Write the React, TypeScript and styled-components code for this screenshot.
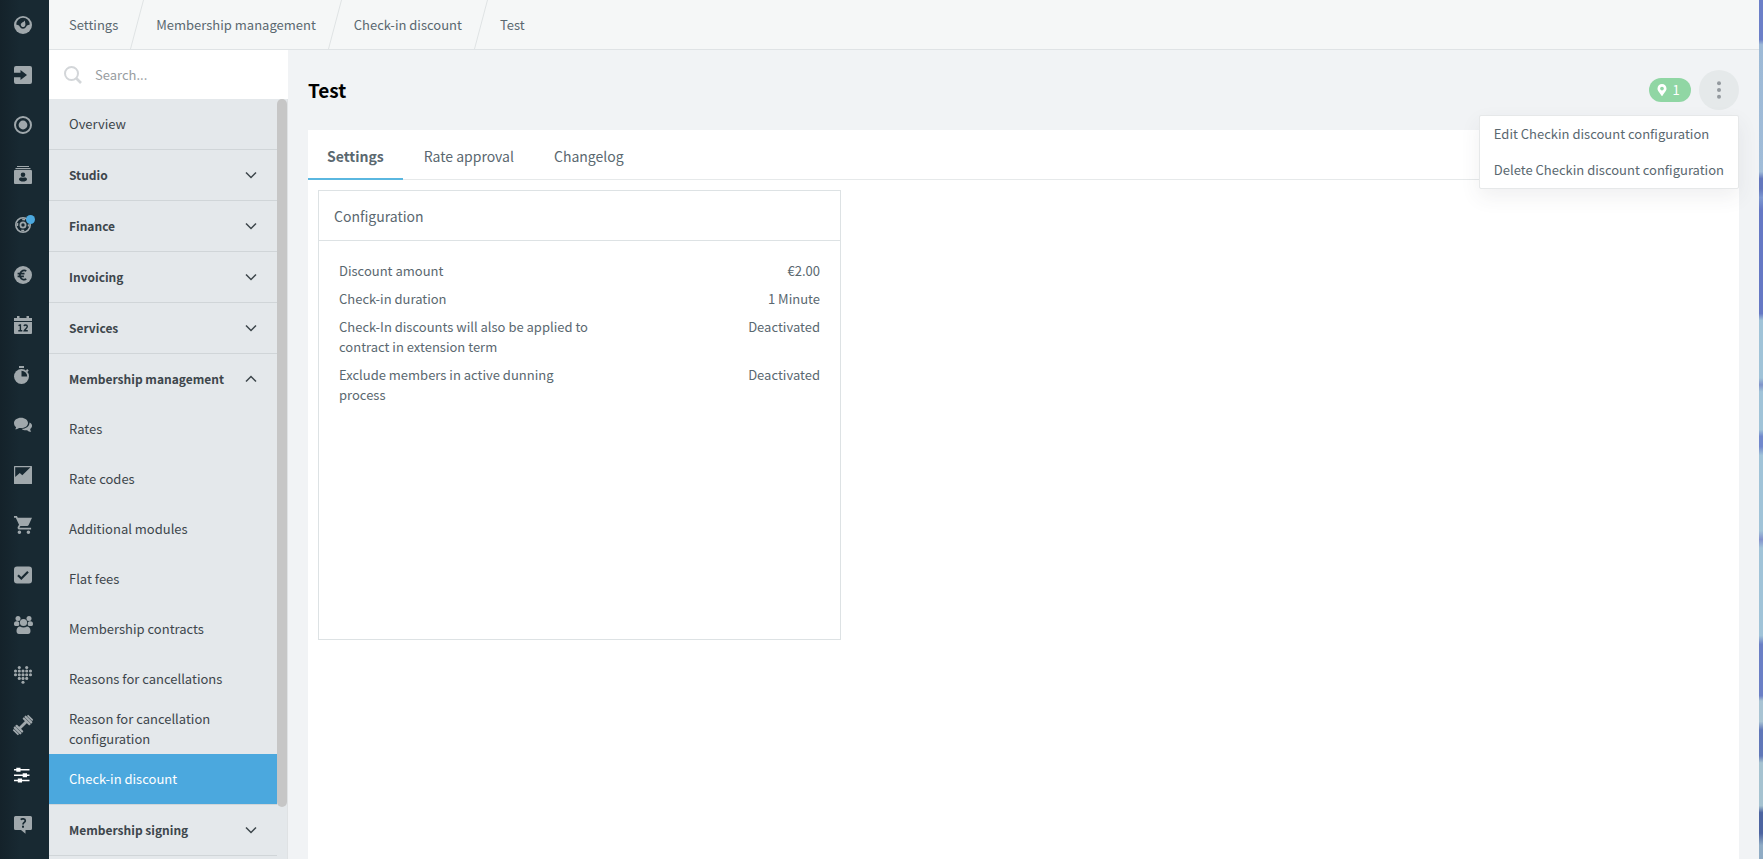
import React from "react";
import styled, { createGlobalStyle, css } from "styled-components";
import { FaMapMarkerAlt } from "react-icons/fa";

const GlobalStyle = createGlobalStyle`
  *, *::before, *::after { box-sizing: border-box; }
  body {
    margin: 0;
    font-family: "Noto Sans CJK SC", "Noto Sans", sans-serif;
    font-size: 13px;
    line-height: 20px;
    color: #5a6870;
  }
  button, input { font: inherit; color: inherit; }
  a { color: inherit; text-decoration: none; }
`;

const Shell = styled.div`
  display: flex;
  height: 100vh;
  overflow: hidden;
  background: #f1f3f5;
`;

const Rail = styled.nav`
  display: flex;
  flex-direction: column;
  flex: none;
  width: 49px;
  background: linear-gradient(90deg, #14222a 0, #182932 20px, #182932 100%);
`;

const RailLink = styled.a<{ $active?: boolean }>`
  position: relative;
  display: flex;
  align-items: center;
  flex: none;
  height: 50px;
  padding-left: 14px;
  color: ${(p) => (p.$active ? "#ffffff" : "#a0a8ac")};
`;

const RailDot = styled.span`
  position: absolute;
  top: 15px;
  left: 26px;
  width: 9px;
  height: 9px;
  border-radius: 50%;
  background: #4ba8de;
`;

const Workspace = styled.div`
  display: flex;
  flex-direction: column;
  flex: 1;
  min-width: 0;
`;

const Breadcrumbs = styled.nav`
  display: flex;
  align-items: center;
  gap: 12px;
  flex: none;
  height: 50px;
  padding-left: 20px;
  background: #f5f7f7;
  border-bottom: 1px solid #dfe3e5;
`;

const Columns = styled.div`
  display: flex;
  flex: 1;
  min-height: 0;
`;

const Sidebar = styled.aside`
  display: flex;
  flex-direction: column;
  flex: none;
  width: 239px;
`;

const SearchBar = styled.label`
  display: flex;
  align-items: center;
  gap: 13px;
  flex: none;
  height: 49px;
  padding-left: 15px;
  background: #ffffff;
  color: #d3d6d9;
`;

const SearchInput = styled.input`
  flex: 1;
  min-width: 0;
  padding: 0;
  border: 0;
  outline: 0;
  background: transparent;
  color: #3d464b;
  &::placeholder { color: #989da1; opacity: 1; }
`;

const SidebarBody = styled.div`
  display: flex;
  flex: 1;
  min-height: 0;
  background: #e4e8eb;
  border-right: 1px solid #dfe2e4;
`;

const Menu = styled.nav`
  flex: 1;
  overflow: hidden;
  color: #3d464b;
`;

const ScrollThumb = styled.div`
  flex: none;
  width: 10px;
  height: 93.2%;
  border-radius: 5px;
  background: #c6c6c6;
`;

const MenuSection = styled.div`
  border-bottom: 1px solid #d0d5d8;
`;

const MenuLink = styled.a<{ $active?: boolean }>`
  display: flex;
  align-items: center;
  height: 50px;
  padding: 0 40px 0 20px;
  ${(p) => p.$active && css`background: #4ba8de; color: #ffffff;`}
`;

const MenuToggle = styled.button`
  display: flex;
  align-items: center;
  justify-content: space-between;
  width: 100%;
  height: 50px;
  padding: 0 20px;
  border: 0;
  background: transparent;
  font-size: 12px;
  font-weight: 700;
  white-space: nowrap;
`;

const Main = styled.main`
  display: flex;
  flex-direction: column;
  flex: 1;
  min-width: 0;
  padding: 0 20px;
`;

const PageHeader = styled.header`
  display: flex;
  align-items: center;
  gap: 8px;
  flex: none;
  height: 80px;
`;

const Title = styled.h1`
  flex: 1;
  margin: 0;
  font-size: 19px;
  line-height: 28px;
  font-weight: 700;
  color: #000000;
`;

const Badge = styled.span`
  display: flex;
  align-items: center;
  justify-content: center;
  gap: 4px;
  width: 42px;
  height: 24px;
  padding-right: 4px;
  border-radius: 12px;
  background: #90d6a4;
  color: #ffffff;
`;

const Actions = styled.div`
  position: relative;
`;

const MoreButton = styled.button`
  display: flex;
  align-items: center;
  justify-content: center;
  width: 40px;
  height: 40px;
  padding: 0;
  border: 0;
  border-radius: 50%;
  background: #e5e9ea;
  color: #949a9f;
`;

const ActionMenu = styled.div`
  position: absolute;
  top: 45px;
  right: 0;
  z-index: 1;
  display: flex;
  flex-direction: column;
  background: #ffffff;
  border: 1px solid #e6e8e9;
  border-radius: 2px;
  box-shadow: 0 8px 20px rgba(60, 70, 80, 0.08);
`;

const ActionItem = styled.button`
  height: 36px;
  padding: 0 14px;
  border: 0;
  background: transparent;
  text-align: left;
  white-space: nowrap;
`;

const Panel = styled.section`
  flex: 1;
  background: #ffffff;
`;

const Tabs = styled.div`
  display: flex;
  gap: 2px;
  height: 50px;
  border-bottom: 1px solid #e6e9ea;
`;

const Tab = styled.button<{ $active?: boolean }>`
  height: 50px;
  padding: 4px 19px 0;
  border: 0;
  border-bottom: 2px solid ${(p) => (p.$active ? "#5ab7e0" : "transparent")};
  background: transparent;
  font-size: 14px;
  font-weight: ${(p) => (p.$active ? 700 : 400)};
`;

const PanelBody = styled.div`
  display: grid;
  grid-template-columns: minmax(0, 523fr) minmax(0, 888fr);
  padding: 10px;
`;

const Card = styled.article`
  min-height: 450px;
  border: 1px solid #dde2e4;
`;

const CardTitle = styled.h2`
  display: flex;
  align-items: center;
  height: 50px;
  margin: 0;
  padding: 0 15px;
  border-bottom: 1px solid #dde2e4;
  font-size: 14px;
  font-weight: 400;
`;

const Facts = styled.dl`
  display: flex;
  flex-direction: column;
  gap: 8px;
  margin: 0;
  padding: 20px;
`;

const Fact = styled.div`
  display: grid;
  grid-template-columns: 13fr 11fr;
`;

const FactValue = styled.dd`
  margin: 0;
  text-align: right;
`;

const Backdrop = styled.div`
  flex: none;
  width: 4px;
  background: linear-gradient(
    180deg,
    #6b7fc8 0, #6b7fc8 4.6%, #9db9d6 5.2%, #a0bcd8 20%, #6377bd 20.8%, #6377bd 22%,
    #7c97d0 23%, #6578c4 24.5%, #6578c4 36.5%, #a0c3d8 37.3%, #a0c3d8 44%, #7f93c9 44.8%,
    #a0c3d8 45.6%, #a0c3d8 50%, #7088cc 50.8%, #7088cc 52%, #a0c3d8 53%, #a0c3d8 61.8%,
    #8292cc 62.8%, #a0c3d8 63.8%, #a0c3d8 74%, #6a7fc5 75%, #6a7fc5 81%, #a8c3d3 81.6%,
    #a8c3d3 84%, #5f76b8 85%, #6078b8 88%, #a5c2d0 88.8%, #a5c2d0 93.8%, #4c64a0 94.6%,
    #4c64a0 97%, #8fabc4 98.4%, #8fabc4 100%
  );
`;

function RailIcon({ children, viewBox = "0 0 18 18" }: { children: React.ReactNode; viewBox?: string }) {
  return (
    <svg width="18" height="18" viewBox={viewBox} fill="currentColor" overflow="visible" aria-hidden="true">
      {children}
    </svg>
  );
}

const dark = "#182932";

const heartDots: [number, number[]][] = [
  [1.5, [5.3, 12.7]],
  [5, [1.5, 5.3, 9, 12.7, 16.5]],
  [8.7, [1.5, 5.3, 9, 12.7, 16.5]],
  [12.4, [5.3, 9, 12.7]],
  [16.3, [9]],
];

const railItems: { name: string; icon: React.ReactNode; active?: boolean; dot?: boolean }[] = [
  {
    name: "Dashboard",
    icon: (
      <RailIcon>
        <circle cx="9" cy="9" r="9" />
        <path d="M2.2 8.6a6.8 6.8 0 0 1 13.6 0l-2.2.6c-.8 0-1 .8-1.4 1.600a3.600 3.600 0 0 1-6.400 0c-.4-.8-.6-1.600-1.400-1.600z" fill={dark} />
        <path d="M10.800 4.600c.2 2 .9 3 .5 4.600a2.300 2.300 0 1 1-3.600-2.300c1.200-.7 2.200-1 3.100-2.300z" />
      </RailIcon>
    ),
  },
  {
    name: "Check-in",
    icon: (
      <RailIcon>
        <path d="M2 0h14a2 2 0 0 1 2 2v14a2 2 0 0 1-2 2H2a2 2 0 0 1-2-2v-4.800h6.500V14L13 9 6.500 4v2.800H0V2a2 2 0 0 1 2-2z" />
      </RailIcon>
    ),
  },
  {
    name: "Live view",
    icon: (
      <RailIcon>
        <circle cx="9" cy="9" r="8" fill="none" stroke="currentColor" strokeWidth="2" />
        <circle cx="9" cy="9" r="4.400" />
      </RailIcon>
    ),
  },
  {
    name: "Members",
    icon: (
      <RailIcon>
        <rect x="3" y="0" width="12" height="1" />
        <rect x="1.500" y="2" width="15" height="1.200" />
        <rect x="0" y="4" width="18" height="14" rx="1" />
        <circle cx="9" cy="8.700" r="2.300" fill={dark} />
        <path d="M5 13.500c0-2.200 2-2.200 4-1.800 2-.4 4-.4 4 1.800C12.500 15 11 15.500 9 15.500S5.500 15 5 13.500z" fill={dark} />
      </RailIcon>
    ),
  },
  {
    name: "Leads",
    dot: true,
    icon: (
      <RailIcon>
        <circle cx="9" cy="9" r="7.200" fill="none" stroke="currentColor" strokeWidth="1.600" />
        <circle cx="9" cy="9" r="5.600" fill="none" stroke="currentColor" strokeWidth="1.600" strokeDasharray="3 5.796" strokeDashoffset="1.500" />
        <circle cx="9" cy="9" r="2.600" fill="none" stroke="currentColor" strokeWidth="1.800" />
      </RailIcon>
    ),
  },
  {
    name: "Finance",
    icon: (
      <RailIcon>
        <circle cx="9" cy="9" r="9" />
        <path d="M12.300 4.900a4.200 4.200 0 0 0-6 2.200c-.5 1.300-.5 2.700 0 4a4.200 4.200 0 0 0 6 2M3.600 7.700h6.900M3.600 10.300h6.300" fill="none" stroke={dark} strokeWidth="1.700" />
      </RailIcon>
    ),
  },
  {
    name: "Calendar",
    icon: (
      <RailIcon>
        <path d="M0 2h3V0h2.500v2h7V0H15v2h3v3H0z" />
        <path d="M0 6h18v11a1 1 0 0 1-1 1H1a1 1 0 0 1-1-1z" />
        <path d="M4.500 9.700l1.600-.8h.3v5.900M4.300 14.800h4M10 10c.3-1.200 3.300-1.500 3.300.5 0 1.500-2.200 2.700-3 4.200h3.500" fill="none" stroke={dark} strokeWidth="1.400" />
      </RailIcon>
    ),
  },
  {
    name: "Time tracking",
    icon: (
      <RailIcon>
        <path d="M5 0h5v2H5z" />
        <circle cx="7.500" cy="10.500" r="7.500" />
        <path d="M7.500 10.500V4.800a5.700 5.700 0 0 1 5.700 5.700z" fill={dark} />
        <path d="M12.500 3.800l1.500 1.500" stroke="currentColor" strokeWidth="2" />
      </RailIcon>
    ),
  },
  {
    name: "Messages",
    icon: (
      <RailIcon>
        <path d="M15.500 6.500c2 .9 3 2.500 2.400 4.300-.3 1-.9 1.600-1.700 2.200 0 1.200.5 2 1 2.700-1.700 0-3-.5-4-1.500-2.200.3-4.200 0-5.700-1.400 4.300 0 8-2.300 8-6.300z" />
        <path d="M7 1.700c3.900 0 7 2.300 7 5.200s-3.100 5.200-7 5.200c-.7 0-1.300-.1-1.900-.2-1.200.9-2.600 1.400-4 1.400.6-.6 1-1.300 1-2.200C.8 10.200 0 8.600 0 6.900 0 4 3.100 1.700 7 1.700z" />
      </RailIcon>
    ),
  },
  {
    name: "Analytics",
    icon: (
      <RailIcon>
        <rect width="18" height="18" rx="0.500" />
        <path d="M1.200 1.200h15.300L8.300 9.300 5.800 7 1.200 11z" fill={dark} />
      </RailIcon>
    ),
  },
  {
    name: "Shop",
    icon: (
      <RailIcon viewBox="1 2 20 20">
        <path d="M7 18a2 2 0 1 0 0 4 2 2 0 0 0 0-4zM1 2v2h2l3.600 7.590-1.350 2.450c-.16.28-.25.61-.25.960 0 1.100.9 2 2 2h13v-2H7.420c-.14 0-.25-.11-.25-.25l.03-.12.9-1.630h7.450c.75 0 1.410-.41 1.750-1.030L21 4H5.210l-.94-2H1zm16 16a2 2 0 1 0 0 4 2 2 0 0 0 0-4z" />
      </RailIcon>
    ),
  },
  {
    name: "Tasks",
    icon: (
      <RailIcon>
        <rect x="0" y="0.500" width="18" height="17" rx="3" />
        <path d="M4 9.300l3.300 3.200L14 5.700" fill="none" stroke={dark} strokeWidth="2.200" />
      </RailIcon>
    ),
  },
  {
    name: "Groups",
    icon: (
      <RailIcon>
        <circle cx="4" cy="2.500" r="2.500" />
        <circle cx="15" cy="2.500" r="2.500" />
        <path d="M0 8c0-2 .8-2.800 2.500-2.800S5.300 5.700 5.300 7.500 4.800 10 4 10H1.500C.5 10 0 9 0 8zM19 8c0-2-.8-2.800-2.500-2.800s-2.800.5-2.800 2.300.5 2.500 1.300 2.500h2.500c1 0 1.500-1 1.500-2z" />
        <circle cx="9.500" cy="6.500" r="3.600" />
        <path d="M2.500 15c0-3 1.500-4.500 3.500-4.500 1 .7 2.200 1 3.500 1s2.500-.3 3.500-1c2 0 3.500 1.500 3.500 4.500 0 2-1 3-2.500 3H5c-1.500 0-2.500-1-2.500-3z" />
      </RailIcon>
    ),
  },
  {
    name: "Health",
    icon: (
      <RailIcon>
        {heartDots.map(([y, xs]) => xs.map((x) => <circle key={`${x}-${y}`} cx={x} cy={y} r="1.550" />))}
      </RailIcon>
    ),
  },
  {
    name: "Training",
    icon: (
      <RailIcon>
        <g transform="rotate(-45 9 9)">
          <rect x="4" y="7.600" width="10" height="2.800" />
          <rect x="-2" y="5.200" width="1.800" height="7.600" rx="0.900" />
          <rect x="0.200" y="4" width="2.200" height="10" rx="1" />
          <rect x="2.700" y="4" width="2.300" height="10" rx="1" />
          <rect x="18.200" y="5.200" width="1.800" height="7.600" rx="0.900" />
          <rect x="15.600" y="4" width="2.200" height="10" rx="1" />
          <rect x="13" y="4" width="2.300" height="10" rx="1" />
        </g>
      </RailIcon>
    ),
  },
  {
    name: "Settings",
    active: true,
    icon: (
      <RailIcon>
        <path d="M0 3.800h15.500M0 9.200h15.500M0 14.500h15.500" fill="none" stroke="currentColor" strokeWidth="1.400" />
        <path d="M2.300 1.800h4.200v4H2.300zM8.700 7.200h4.300v4H8.700zM3.800 12.500H8v4H3.800z" />
      </RailIcon>
    ),
  },
  {
    name: "Help",
    icon: (
      <RailIcon>
        <path d="M1.500 0h15A1.500 1.500 0 0 1 18 1.500v11a1.500 1.500 0 0 1-1.500 1.500H11.500v3.800L7 14H1.500A1.500 1.500 0 0 1 0 12.500v-11A1.500 1.500 0 0 1 1.500 0z" />
        <path d="M6.700 3.600c1-1 4.600-1.100 4.600 1.100 0 1.700-2.300 1.700-2.300 3.700" fill="none" stroke={dark} strokeWidth="1.700" />
        <rect x="8" y="9.700" width="2" height="2" fill={dark} />
      </RailIcon>
    ),
  },
];

function Chevron({ up }: { up?: boolean }) {
  return (
    <svg width="12" height="8" viewBox="0 0 12 8" fill="none" stroke="currentColor" strokeWidth="1.500" aria-hidden="true">
      <path d={up ? "M1 6.500l5-5 5 5" : "M1 1.500l5 5 5-5"} />
    </svg>
  );
}

function Slash() {
  return (
    <svg width="14" height="49" viewBox="0 0 14 49" fill="none" stroke="#dfe3e4" aria-hidden="true">
      <path d="M13.500 0L0.500 49" />
    </svg>
  );
}

const crumbs = ["Settings", "Membership management", "Check-in discount", "Test"];

const sections: { name: string; items?: string[] }[] = [
  { name: "Studio" },
  { name: "Finance" },
  { name: "Invoicing" },
  { name: "Services" },
  {
    name: "Membership management",
    items: [
      "Rates",
      "Rate codes",
      "Additional modules",
      "Flat fees",
      "Membership contracts",
      "Reasons for cancellations",
      "Reason for cancellation configuration",
      "Check-in discount",
    ],
  },
  { name: "Membership signing" },
];

const facts = [
  ["Discount amount", "€2.00"],
  ["Check-in duration", "1 Minute"],
  ["Check-In discounts will also be applied to contract in extension term", "Deactivated"],
  ["Exclude members in active dunning process", "Deactivated"],
];

export default function App() {
  return (
    <Shell>
      <GlobalStyle />
      <Rail aria-label="Modules">
        {railItems.map((item) => (
          <RailLink key={item.name} href="#" aria-label={item.name} $active={item.active}>
            {item.icon}
            {item.dot && <RailDot />}
          </RailLink>
        ))}
      </Rail>
      <Workspace>
        <Breadcrumbs aria-label="Breadcrumb">
          {crumbs.map((crumb, i) => (
            <React.Fragment key={crumb}>
              {i > 0 && <Slash />}
              <a href="#">{crumb}</a>
            </React.Fragment>
          ))}
        </Breadcrumbs>
        <Columns>
          <Sidebar>
            <SearchBar>
              <svg width="18" height="18" viewBox="0 0 18 18" fill="none" stroke="currentColor" strokeWidth="2" aria-hidden="true">
                <circle cx="7.500" cy="7.500" r="6.500" />
                <path d="M12 12l5 5" strokeWidth="2.600" />
              </svg>
              <SearchInput type="text" placeholder="Search..." aria-label="Search" />
            </SearchBar>
            <SidebarBody>
              <Menu aria-label="Settings">
                <MenuSection>
                  <MenuLink href="#">Overview</MenuLink>
                </MenuSection>
                {sections.map((section) => (
                  <MenuSection key={section.name}>
                    <MenuToggle type="button" aria-expanded={!!section.items}>
                      {section.name}
                      <Chevron up={!!section.items} />
                    </MenuToggle>
                    {section.items?.map((name) => (
                      <MenuLink key={name} href="#" $active={name === "Check-in discount"}>
                        {name}
                      </MenuLink>
                    ))}
                  </MenuSection>
                ))}
              </Menu>
              <ScrollThumb />
            </SidebarBody>
          </Sidebar>
          <Main>
            <PageHeader>
              <Title>Test</Title>
              <Badge>
                <FaMapMarkerAlt size={12} aria-hidden="true" />1
              </Badge>
              <Actions>
                <MoreButton type="button" aria-label="More actions" aria-expanded="true">
                  <svg width="4" height="18" viewBox="0 0 4 18" fill="currentColor" aria-hidden="true">
                    <circle cx="2" cy="2.300" r="2" />
                    <circle cx="2" cy="9" r="2" />
                    <circle cx="2" cy="15.700" r="2" />
                  </svg>
                </MoreButton>
                <ActionMenu role="menu">
                  <ActionItem type="button" role="menuitem">Edit Checkin discount configuration</ActionItem>
                  <ActionItem type="button" role="menuitem">Delete Checkin discount configuration</ActionItem>
                </ActionMenu>
              </Actions>
            </PageHeader>
            <Panel>
              <Tabs role="tablist">
                <Tab type="button" role="tab" aria-selected="true" $active>Settings</Tab>
                <Tab type="button" role="tab" aria-selected="false">Rate approval</Tab>
                <Tab type="button" role="tab" aria-selected="false">Changelog</Tab>
              </Tabs>
              <PanelBody>
                <Card>
                  <CardTitle>Configuration</CardTitle>
                  <Facts>
                    {facts.map(([label, value]) => (
                      <Fact key={label}>
                        <dt>{label}</dt>
                        <FactValue>{value}</FactValue>
                      </Fact>
                    ))}
                  </Facts>
                </Card>
              </PanelBody>
            </Panel>
          </Main>
        </Columns>
      </Workspace>
      <Backdrop />
    </Shell>
  );
}
